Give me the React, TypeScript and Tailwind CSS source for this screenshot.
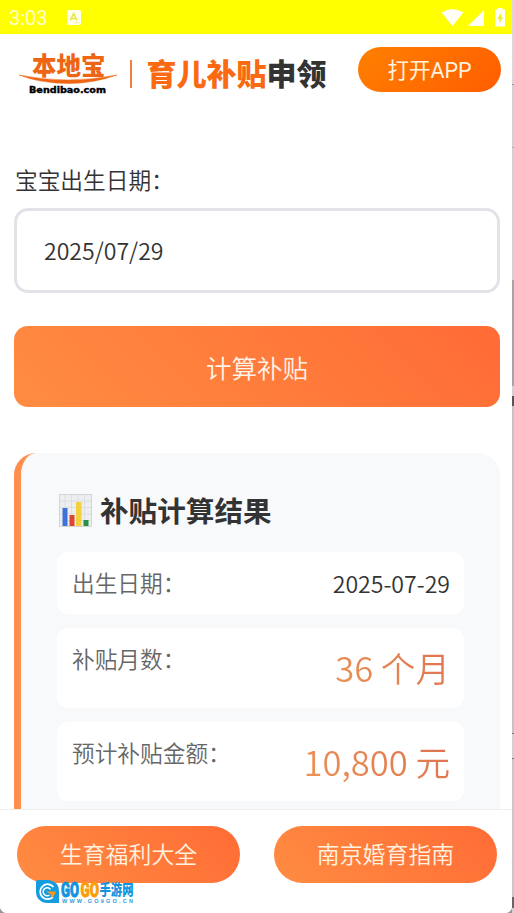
import React from 'react';

const cjk = "font-['Noto_Sans_CJK_SC',sans-serif]";

const results = [
  { label: '出生日期：', value: '2025-07-29', big: false },
  { label: '补贴月数：', value: '36 个月', big: true },
  { label: '预计补贴金额：', value: '10,800 元', big: true },
];

const links = ['生育福利大全', '南京婚育指南'];

// 状态栏
function StatusBar() {
  return (
    <div className="flex h-[34px] shrink-0 items-center bg-[#ffff00] pl-[9px] pr-[7px] text-[#ffffd0]">
      <span className="pt-[1px] font-['Roboto',sans-serif] text-[20px] font-normal leading-none">3:03</span>
      <svg className="ml-[19px]" width="14" height="15" viewBox="0 0 14 15">
        <rect width="14" height="15" rx="1.5" fill="#fffff0" />
        <path d="M3.3 10.5 6.7 3.5 10 10.5M4.7 8.4h4" fill="none" stroke="#e6e640" strokeWidth="1.5" />
        <path d="M7.5 12.7h4" stroke="#e5e540" strokeDasharray="1 .7" />
      </svg>
      <svg className="ml-auto" width="64" height="19" viewBox="0 0 64 19" fill="#fffff5">
        <path d="M.5 4.500Q11.500-2.500 22.500 4.500L11.500 18Z" />
        <path d="M27 18 43 2v16Z" />
        <path d="M56.500 0h5v1.500h2.500V18.500H54V1.500h2.500Z" />
        <path d="M60.200 4.500 56.500 11h2v4.500l3.500-6.300h-2Z" fill="#eded30" />
      </svg>
    </div>
  );
}

function Header() {
  return (
    <header className="flex h-[96px] shrink-0 items-start pl-[19px] pr-[11px]">
      <div className="relative mt-[17px] h-[46px] w-[98px]">
        <div className={`${cjk} pl-[13px] text-[24.5px] font-black leading-[28px] text-[#ee6513]`}>本地宝</div>
        <svg className="absolute left-0 top-[23px]" width="98" height="10" viewBox="0 0 98 10">
          <path d="M0 1Q48 11 98 1Q74 9.500 50 9.500Q22 9.500 0 1Z" fill="#ee6513" stroke="#ee6513" strokeWidth=".5" />
        </svg>
        <svg
          className="absolute left-[10px] top-[34px] overflow-visible font-['DejaVu_Sans',sans-serif] text-[9px] font-bold"
          width="78"
          height="10"
          viewBox="0 0 78 10"
        >
          <text x="0" y="8" textLength="77" lengthAdjust="spacingAndGlyphs" stroke="#000" strokeWidth=".4">
            Bendibao.com
          </text>
        </svg>
      </div>
      <div className="ml-[13px] mt-[26px] h-[28px] w-[1.5px] bg-[#ee8040]" />
      <div className={`${cjk} ml-[15px] mt-[18px] whitespace-nowrap text-[30px] font-black leading-[40px] text-[#333]`}>
        <span className="text-[#f96a12]">育儿补贴</span>申领
      </div>
      <button className="ml-auto mt-[13px] h-[45px] w-[143px] rounded-full bg-linear-135 from-[#ff8000] to-[#ff5c00] pt-[3px] font-['Roboto','Noto_Sans_CJK_SC',sans-serif] text-[21.5px] font-normal text-[#fff3e0]">
        打开APP
      </button>
    </header>
  );
}

function ChartIcon() {
  return (
    <svg width="33" height="33" viewBox="0 0 33 33">
      <rect x=".5" y=".5" width="32" height="32" fill="#eceeef" stroke="#d3d5d7" />
      <path d="M6 1v31M12.500 1v31M19 1v31M25.500 1v31M1 7h31M1 13.500h31M1 20h31M1 26.500h31" stroke="#dcdee0" />
      <rect x="3.500" y="14" width="5" height="18" fill="#3f72d8" />
      <rect x="10.500" y="21" width="5" height="11" fill="#dd4632" />
      <rect x="17" y="8" width="5.500" height="24" fill="#f4d03c" />
      <rect x="24.500" y="26" width="5" height="6" fill="#28904a" />
    </svg>
  );
}

function Watermark() {
  return (
    <div className="absolute left-[36px] top-[70px] flex h-[24px] w-[99px]">
      <svg width="23" height="23" viewBox="0 0 23 23" className="shrink-0">
        <path d="M2 0h11q10 2 10 11v12H10Q0 21 0 12V2q0-2 2-2Z" fill="#149be0" />
        <path d="M17.500 7A7.500 7.500 0 1 0 17 17" fill="none" stroke="#fff" strokeWidth="1.800" />
        <path d="M14.500 9.500a4 4 0 1 0-1 5.500" fill="none" stroke="#fff" strokeWidth="1.500" />
        <path d="M10 11.500h10q-1 4-4.500 6.500l-1-4Z" fill="#f79a18" />
      </svg>
      <svg width="74" height="24" viewBox="0 0 74 24" className="ml-[2px] shrink-0 overflow-visible">
        <g className="font-['Roboto',sans-serif] text-[20px] font-black" strokeWidth=".9">
          <text x="0" y="17" textLength="18" lengthAdjust="spacingAndGlyphs" fill="#1492dc" stroke="#1492dc">GO</text>
          <text x="19.500" y="17" textLength="18.500" lengthAdjust="spacingAndGlyphs" fill="#fa9d08" stroke="#fa9d08">GO</text>
        </g>
        <text x="38.500" y="15" textLength="34" lengthAdjust="spacingAndGlyphs" className="font-['Noto_Sans_CJK_SC',sans-serif] text-[14.5px] font-black" fill="#1492dc">
          手游网
        </text>
        <text x="1" y="22.500" textLength="71" className="font-['Liberation_Sans',sans-serif] text-[5.5px] font-bold" fill="#2b9bdc">
          WWW.GO9GO.CN
        </text>
      </svg>
    </div>
  );
}

// 屏幕右侧露出的窗口边缘
function WindowEdge() {
  return (
    <div className="flex w-[2px] shrink-0 flex-col bg-[#d2d2d2]">
      <div className="h-[84px] bg-[#d8d8d8]" />
      <div className="h-[1px] bg-[#999]" />
      <div className="h-[62px]" />
      <div className="h-[1px] bg-[#aaa]" />
      <div className="h-[132px]" />
      <div className="h-[106px] bg-[#a5a5a5]" />
      <div className="h-[10px]" />
      <div className="h-[10px] bg-[#555]" />
      <div className="h-[327px] bg-[#c4c4c4]" />
      <div className="h-[1px] bg-[#777]" />
      <div className="h-[24px]" />
      <div className="h-[1px] bg-[#777]" />
      <div className="h-[138px] bg-[#c8c8c8]" />
      <div className="h-[11px] bg-[#666]" />
    </div>
  );
}

export default function App() {
  return (
    <div lang="zh-CN" className={`${cjk} flex h-[913px] w-[514px] overflow-hidden bg-[#999] font-[350]`}>
      <div className="flex w-[512px] shrink-0 flex-col overflow-hidden rounded-b-[7px] bg-white">
        <StatusBar />
        <Header />

        <main className="h-[679px] shrink-0 overflow-hidden pl-[14px] pr-[12px]">
          <div className="mt-[33px] h-[34px] pl-[1px] text-[22.7px] leading-[34px] text-[#333]">宝宝出生日期：</div>
          <div className="mt-[11px] flex h-[85px] items-center rounded-[14px] border-3 border-[#e1e3e8] pl-[27px] text-[23.1px] text-[#333]">
            2025/07/29
          </div>
          <button className="mt-[33px] block h-[81px] w-full rounded-[14px] bg-linear-45 from-[#ff8c42] to-[#ff6b35] pt-[2px] text-[25.5px] text-[#fff3e8]">
            计算补贴
          </button>

          <section className="mt-[46px] h-[400px] rounded-[22px] border-l-[7px] border-[#ff8f4b] bg-[#f8f9fb] px-[36px] pt-[36px]">
            <h3 className="flex h-[43px] items-center gap-[8px] pl-[2px] text-[28.6px] font-bold text-[#333]">
              <ChartIcon />
              补贴计算结果
            </h3>
            <div className="mt-[20px] flex flex-col gap-[14px]">
              {results.map((item) => (
                <div
                  key={item.label}
                  className={`flex justify-between rounded-[11px] bg-white px-[14px] pt-[13px] ${item.big ? 'h-[80px] last:h-[79px]' : 'h-[62px]'}`}
                >
                  <span className="pl-[1px] text-[22.7px] leading-[36px] text-[#666]">{item.label}</span>
                  {item.big ? (
                    <span className="bg-linear-45 from-[#ed9855] to-[#dd7050] bg-clip-text text-[34.6px] leading-[52px] text-transparent">
                      {item.value}
                    </span>
                  ) : (
                    <span className="text-[23.1px] leading-[36px] text-[#333]">{item.value}</span>
                  )}
                </div>
              ))}
            </div>
          </section>
        </main>

        <footer className="relative flex h-[104px] shrink-0 gap-[34px] border-t border-[#eee] bg-white pl-[17px] pr-[15px] pt-[16px]">
          {links.map((text) => (
            <button
              key={text}
              className="h-[57px] w-[223px] rounded-full bg-linear-45 from-[#ff8c42] to-[#ff6b35] pb-[2px] text-[22.9px] text-[#fff3e0]"
            >
              {text}
            </button>
          ))}
          <Watermark />
        </footer>
      </div>
      <WindowEdge />
    </div>
  );
}
